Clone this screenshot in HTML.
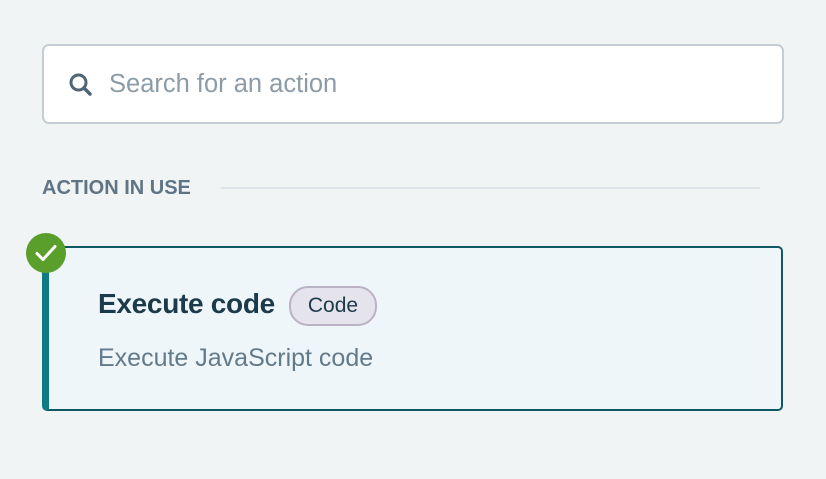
<!DOCTYPE html>
<html><head><style>
body{margin:0;width:826px;height:479px;background:#f0f4f5;font-family:"Liberation Sans",sans-serif;position:relative;overflow:hidden}
.search{position:absolute;left:42px;top:44px;width:738px;height:76px;background:#fff;border:2px solid #c4cdd4;border-radius:7px}
.search span{position:absolute;left:65px;top:24px;font-size:25.5px;color:#8b9ba7}
.search svg{position:absolute;left:24px;top:26px}
.hdr{position:absolute;left:42px;top:177px;font-size:20px;font-weight:bold;color:#5f7484}
.line{position:absolute;left:221px;top:187px;width:539px;height:2px;background:#dfe4e8}
.card{position:absolute;left:42px;top:246px;width:732px;height:161px;background:#eef6f9;border:2px solid #0e5961;border-left:7px solid #0f7c85;border-radius:5px}
.check{position:absolute;left:26px;top:233px;width:40px;height:40px;border-radius:50%;background:#5a9e2c}
.title{position:absolute;left:98px;top:288px;font-size:28px;font-weight:bold;color:#1d3a4a;letter-spacing:-0.3px}
.badge{position:absolute;left:289px;top:286px;width:84px;height:36px;border:2px solid #bbb2c5;background:#e5e4ec;border-radius:19px;font-size:21px;color:#1d3a4a;text-align:center;line-height:36px}
.desc{position:absolute;left:98px;top:344px;font-size:25px;color:#637a8a}
</style></head><body>
<div class="search"><svg width="26" height="26" viewBox="0 0 26 26"><circle cx="10.5" cy="10.5" r="7.5" fill="none" stroke="#4f6676" stroke-width="3"/><path d="M16 16l6 6" stroke="#4f6676" stroke-width="3.5" stroke-linecap="round"/></svg><span>Search for an action</span></div>
<div class="hdr">ACTION IN USE</div>
<div class="line"></div>
<div class="card"></div>
<div class="check"><svg width="40" height="40" viewBox="0 0 40 40"><path d="M11 20.5l6 6 12-13" fill="none" stroke="#fff" stroke-width="3" stroke-linecap="round" stroke-linejoin="round"/></svg></div>
<div class="title">Execute code</div>
<div class="badge">Code</div>
<div class="desc">Execute JavaScript code</div>
</body></html>
